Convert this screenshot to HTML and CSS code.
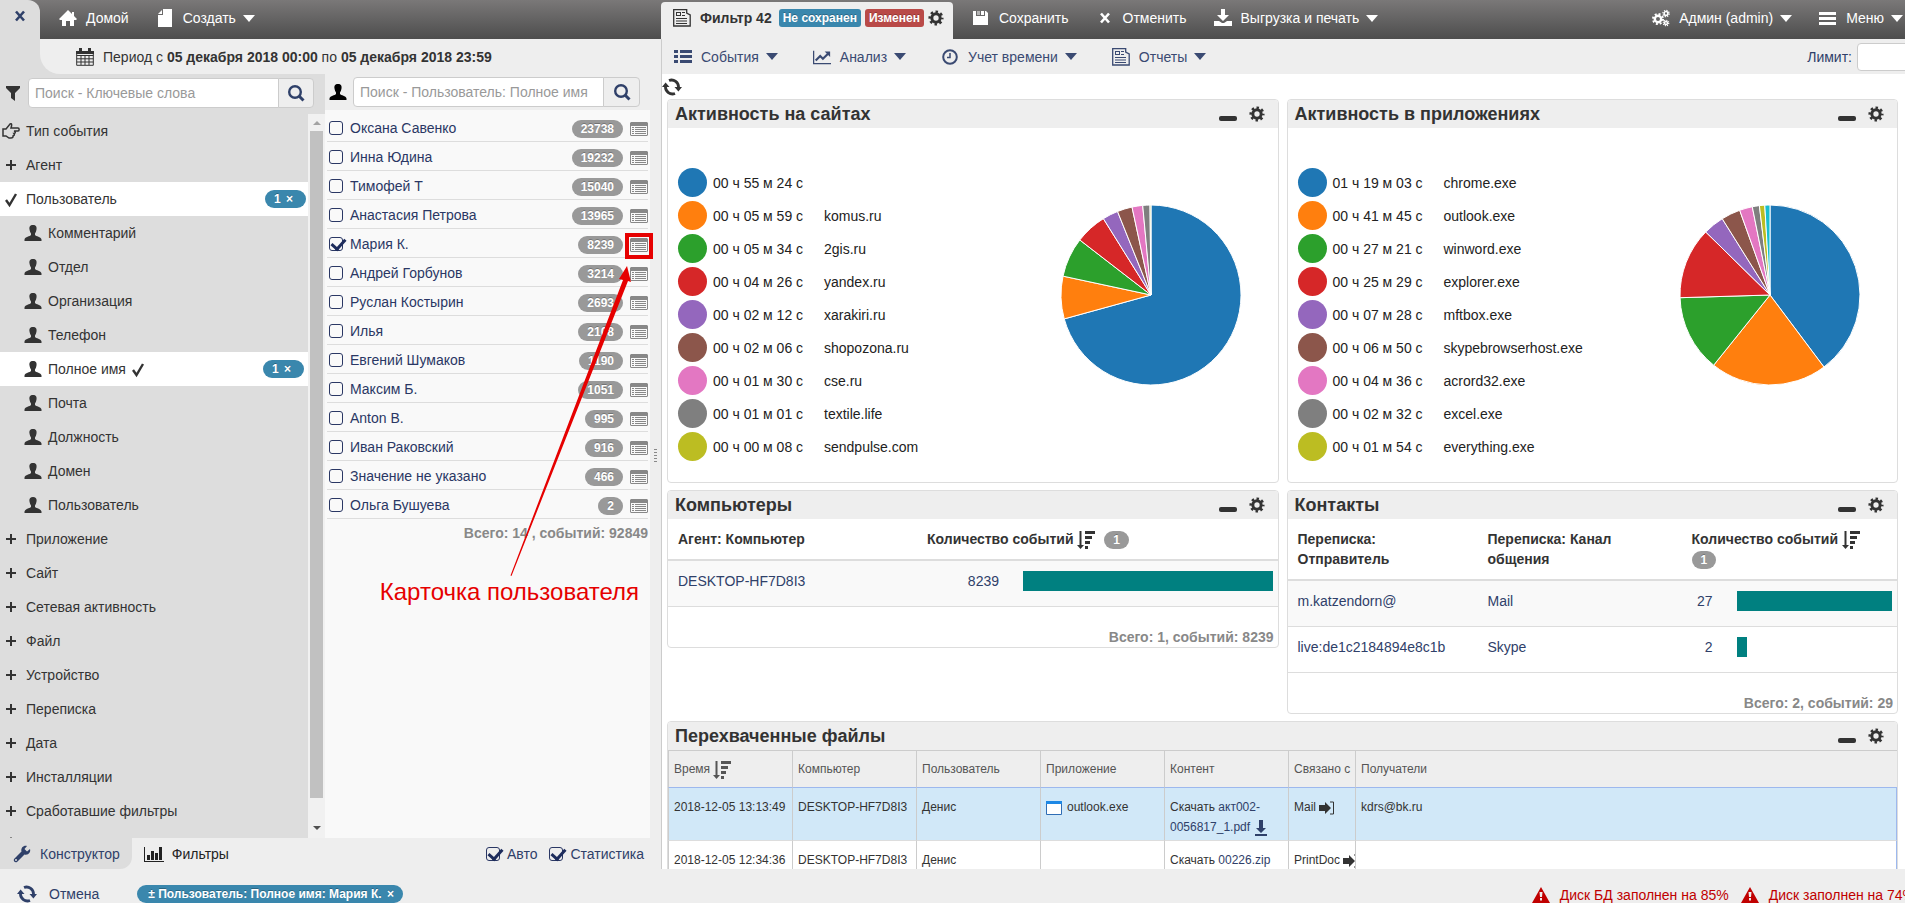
FILE: index.html
```html
<!DOCTYPE html>
<html lang="ru">
<head>
    <meta charset="UTF-8">
    <meta name="viewport" content="width=device-width, initial-scale=1.0">
    <title>Фильтр 42</title>
    <link rel="stylesheet" href="styles.css">
</head>
<body>
    <svg class="sprite" aria-hidden="true">
        <symbol id="i-home" viewBox="0 0 18 18"><path d="M9 1 0 10l1 1h2v6h4v-5h4v5h4v-6h2l1-1-3-3V3h-2v2z"/></symbol>
        <symbol id="i-file" viewBox="0 0 18 18"><path d="M7 0h9v18H2V6h5z"/><path d="M2 5l4-4v4z"/></symbol>
        <symbol id="i-calendar" viewBox="0 0 18 18"><path d="M.7 3.700h16.600v13.600H.7zM.7 7.500h16.600M.7 10.800h16.600M.7 14h16.600M5 7v10M9 7v10M13 7v10" fill="none" stroke="currentColor"/><path d="M0 3h18v3H0zM3 0h3v5H3zm9 0h3v5h-3z"/></symbol>
        <symbol id="i-filter" viewBox="0 0 18 18"><path d="M2 2h14v2l-5 5v8l-4-3V9L2 4z"/></symbol>
        <symbol id="i-search" viewBox="0 0 18 18"><circle cx="8" cy="8" r="5.8" fill="none" stroke="currentColor" stroke-width="2.4"/><path d="M12 12l4.5 4.5" stroke="currentColor" stroke-width="3"/></symbol>
        <symbol id="i-hand" viewBox="0 0 18 18"><path d="M1 7h3l4-5c2-1 2 1 1 4h7c1.500 0 1.500 3 0 3h-4c2 .5 1.500 2.500 0 2.500.8 1 .3 2-.8 2.200 0 1.500-.8 2.300-2.200 2.300H7L4 14H1z" fill="none" stroke="currentColor" stroke-width="1.500"/></symbol>
        <symbol id="i-plus" viewBox="0 0 18 18"><path d="M8 4h2v4h4v2h-4v4H8v-4H4V8h4z"/></symbol>
        <symbol id="i-check" viewBox="0 0 18 18"><path d="M4 10l3.500 5L14 4" fill="none" stroke="currentColor" stroke-width="2.400"/></symbol>
        <symbol id="i-user" viewBox="0 0 18 18"><path d="M9 1c3 0 4 2 3.500 4.500-.3 2-1 3-1.500 4V11c1 1.500 6 1.500 6.500 4.500V17H.5v-1.500C1 12.500 6 12.500 7 11V9.500c-.5-1-1.200-2-1.500-4C5 3 6 1 9 1z"/></symbol>
        <symbol id="i-card" viewBox="0 0 18 14"><path d="M1 0h16l1 1v12l-1 1H1l-1-1V1zM1 4v9h16V4zm1 1h2v1H2zm3 0h11v1H5zM2 7h2v1H2zm3 0h11v1H5zM2 9h2v1H2zm3 0h11v1H5zM2 11h2v1H2zm3 0h11v1H5z" fill-rule="evenodd"/></symbol>
        <symbol id="i-x" viewBox="0 0 18 18"><path d="M5 4.500l8 9M13 4.500l-8 9" stroke="currentColor" stroke-width="2.600"/></symbol>
        <symbol id="i-news" viewBox="0 0 18 18"><path d="M.7.700h13V4l3.500 2v11H.7z" fill="none" stroke="currentColor" stroke-width="1.300"/><path d="M3 3h5v4H3zm1 1v2h3V4zm5-1h3v1H9zm0 3h3v1H9zM3 9h11v1H3zm0 2.500h11v1H3zM3 14h11v1H3z" fill-rule="evenodd"/></symbol>
        <symbol id="i-gear" viewBox="0 0 18 18"><circle cx="9" cy="9" r="4.700" fill="none" stroke="currentColor" stroke-width="3.400"/><circle cx="9" cy="9" r="7.100" fill="none" stroke="currentColor" stroke-width="2.800" stroke-dasharray="2.788" stroke-dashoffset="1.394"/></symbol>
        <symbol id="i-cogs" viewBox="0 0 18 18"><circle cx="6" cy="10" r="3.200" fill="none" stroke="currentColor" stroke-width="2.400"/><circle cx="6" cy="10" r="5" fill="none" stroke="currentColor" stroke-width="2" stroke-dasharray="1.963"/><circle cx="14" cy="4.500" r="1.900" fill="none" stroke="currentColor" stroke-width="1.500"/><circle cx="14" cy="4.500" r="3.100" fill="none" stroke="currentColor" stroke-width="1.300" stroke-dasharray="1.217"/><circle cx="14" cy="14" r="1.500" fill="none" stroke="currentColor" stroke-width="1.500"/><circle cx="14" cy="14" r="2.700" fill="none" stroke="currentColor" stroke-width="1.300" stroke-dasharray="1.060"/></symbol>
        <symbol id="i-save" viewBox="0 0 18 18"><path d="M1 2h3v5h9V2h1l2 2v12H1zm8 0h3v4H9z" fill-rule="evenodd"/><path d="M5 2h3v4H5z" opacity=".5"/></symbol>
        <symbol id="i-download" viewBox="0 0 18 18"><path d="M7 0h4v6h4l-6 6-6-6h4z"/><path d="M0 12h5l3 2h2l3-2h5v5H0z"/></symbol>
        <symbol id="i-menu" viewBox="0 0 18 18"><path d="M0 3h17v3H0zm0 5h17v3H0zm0 5h17v3H0z"/></symbol>
        <symbol id="i-list" viewBox="0 0 18 18"><path d="M6 2h12v3H6zm0 5h12v3H6zm0 5h12v3H6zM0 2h4v3H0zm0 5h4v3H0zm0 5h4v3H0z"/></symbol>
        <symbol id="i-chart" viewBox="0 0 20 18"><path d="M.7 2v14.300H20" fill="none" stroke="currentColor" stroke-width="1.400"/><path d="M3 13l5-5 3 3 6-6" fill="none" stroke="currentColor" stroke-width="2.400"/><path d="M13 3h6v6z"/></symbol>
        <symbol id="i-clock" viewBox="0 0 18 18"><circle cx="9" cy="9" r="6.800" fill="none" stroke="currentColor" stroke-width="2"/><path d="M9 5v4.500H6" fill="none" stroke="currentColor" stroke-width="1.500"/></symbol>
        <symbol id="i-refresh" viewBox="0 0 20 18"><path d="M7 2.500a7 7 0 0 1 9.500 7M13 15.500a7 7 0 0 1-9.500-7" fill="none" stroke="currentColor" stroke-width="2.800"/><path d="M12.500 9H20l-3.600 4.500zM0 9h7.500L3.600 4.500z"/></symbol>
        <symbol id="i-sort" viewBox="0 0 18 18"><path d="M2.500 0h2v14H7l-3.500 4L0 14h2.500zM8 0h10v3H8zm0 5h7v3H8zm0 5h5v3H8zm0 5h3v3H8z"/></symbol>
        <symbol id="i-window" viewBox="0 0 16 14"><path d="M.5.500h15v13H.5z" fill="#fff" stroke="#2f6db5"/><path d="M0 0h16v3H0z" fill="#1e88e5"/></symbol>
        <symbol id="i-save-file" viewBox="0 0 12 16"><path d="M4 0h4v8h3l-5 5-5-5h3zM0 14h12v2H0z"/></symbol>
        <symbol id="i-signin" viewBox="0 0 16 14"><path d="M0 4h6V1l6 6-6 6v-3H0z"/><path d="M11 1h3.500v12H11" fill="none" stroke="currentColor"/></symbol>
        <symbol id="i-wrench" viewBox="0 0 18 18"><path d="M17 4l-3 2.500L11.500 4 14 1C11 0 7.500 2.500 8.500 6.500L1 14c-1 2 1 4 3 3l7.500-7.500C15.500 10.500 18 7 17 4zM3 16a1 1 0 1 1 0-2 1 1 0 0 1 0 2z"/></symbol>
        <symbol id="i-bars" viewBox="0 0 20 18"><path d="M0 2h1v14h19v1H0zm3 8h3v5H3zm4-4h3v9H7zm4 2h3v7h-3zm4-6h3v13h-3z"/></symbol>
        <symbol id="i-warning" viewBox="0 0 18 16"><path d="M9 0l9 16H0zM7.500 5l.5 5h2l.5-5zm.5 6v2.500h2V11z" fill-rule="evenodd"/></symbol>
    </svg>

    <div class="app">
        <div class="workspace">
            <aside class="left">
                <div class="topbar">
                    <button class="close-tab" aria-label="Закрыть"><svg class="icon"><use href="#i-x"/></svg></button>
                    <nav class="topnav">
                        <a href="#"><svg class="icon"><use href="#i-home"/></svg>Домой</a>
                        <a href="#"><svg class="icon"><use href="#i-file"/></svg>Создать<i class="caret"></i></a>
                    </nav>
                </div>
                <div class="period-wrap">
                    <div class="period">
                        <svg class="icon"><use href="#i-calendar"/></svg>
                        <span>Период с <b>05 декабря 2018 00:00</b> по <b>05 декабря 2018 23:59</b></span>
                    </div>
                </div>
                <div class="columns">
                    <section class="tree-col">
                        <form class="search">
                            <svg class="icon"><use href="#i-filter"/></svg>
                            <input type="text" aria-label="Ключевые слова" placeholder="Поиск - Ключевые слова">
                            <button type="button" aria-label="Найти"><svg class="icon"><use href="#i-search"/></svg></button>
                        </form>
                        <div class="tree-box">
                            <ul class="tree">
                                <li><svg class="icon"><use href="#i-hand"/></svg>Тип события</li>
                                <li><svg class="icon"><use href="#i-plus"/></svg>Агент</li>
                                <li class="active"><svg class="icon"><use href="#i-check"/></svg>Пользователь<span class="badge blue">1 <small>×</small></span></li>
                                <li class="sub"><svg class="icon"><use href="#i-user"/></svg>Комментарий</li>
                                <li class="sub"><svg class="icon"><use href="#i-user"/></svg>Отдел</li>
                                <li class="sub"><svg class="icon"><use href="#i-user"/></svg>Организация</li>
                                <li class="sub"><svg class="icon"><use href="#i-user"/></svg>Телефон</li>
                                <li class="sub active"><svg class="icon"><use href="#i-user"/></svg>Полное имя<svg class="icon mark"><use href="#i-check"/></svg><span class="badge blue">1 <small>×</small></span></li>
                                <li class="sub"><svg class="icon"><use href="#i-user"/></svg>Почта</li>
                                <li class="sub"><svg class="icon"><use href="#i-user"/></svg>Должность</li>
                                <li class="sub"><svg class="icon"><use href="#i-user"/></svg>Домен</li>
                                <li class="sub"><svg class="icon"><use href="#i-user"/></svg>Пользователь</li>
                                <li><svg class="icon"><use href="#i-plus"/></svg>Приложение</li>
                                <li><svg class="icon"><use href="#i-plus"/></svg>Сайт</li>
                                <li><svg class="icon"><use href="#i-plus"/></svg>Сетевая активность</li>
                                <li><svg class="icon"><use href="#i-plus"/></svg>Файл</li>
                                <li><svg class="icon"><use href="#i-plus"/></svg>Устройство</li>
                                <li><svg class="icon"><use href="#i-plus"/></svg>Переписка</li>
                                <li><svg class="icon"><use href="#i-plus"/></svg>Дата</li>
                                <li><svg class="icon"><use href="#i-plus"/></svg>Инсталляции</li>
                                <li><svg class="icon"><use href="#i-plus"/></svg>Сработавшие фильтры</li>
                                <li><svg class="icon"><use href="#i-home"/></svg></li>
                            </ul>
                            <div class="scrollbar"><i class="arrow-up"></i><div class="thumb"></div><i class="arrow-down"></i></div>
                        </div>
                    </section>
                    <section class="users-col">
                        <form class="search">
                            <svg class="icon"><use href="#i-user"/></svg>
                            <input type="text" aria-label="Пользователь" placeholder="Поиск - Пользователь: Полное имя">
                            <button type="button" aria-label="Найти"><svg class="icon"><use href="#i-search"/></svg></button>
                        </form>
                        <div class="users">
                            <ul>
                                <li><label><input type="checkbox">Оксана Савенко</label><span class="badge">23738</span><button aria-label="Карточка"><svg class="card-icon"><use href="#i-card"/></svg></button></li>
                                <li><label><input type="checkbox">Инна Юдина</label><span class="badge">19232</span><button aria-label="Карточка"><svg class="card-icon"><use href="#i-card"/></svg></button></li>
                                <li><label><input type="checkbox">Тимофей Т</label><span class="badge">15040</span><button aria-label="Карточка"><svg class="card-icon"><use href="#i-card"/></svg></button></li>
                                <li><label><input type="checkbox">Анастасия Петрова</label><span class="badge">13965</span><button aria-label="Карточка"><svg class="card-icon"><use href="#i-card"/></svg></button></li>
                                <li><label><input type="checkbox" checked>Мария К.</label><span class="badge">8239</span><button aria-label="Карточка"><svg class="card-icon"><use href="#i-card"/></svg></button></li>
                                <li><label><input type="checkbox">Андрей Горбунов</label><span class="badge">3214</span><button aria-label="Карточка"><svg class="card-icon"><use href="#i-card"/></svg></button></li>
                                <li><label><input type="checkbox">Руслан Костырин</label><span class="badge">2693</span><button aria-label="Карточка"><svg class="card-icon"><use href="#i-card"/></svg></button></li>
                                <li><label><input type="checkbox">Илья</label><span class="badge">2108</span><button aria-label="Карточка"><svg class="card-icon"><use href="#i-card"/></svg></button></li>
                                <li><label><input type="checkbox">Евгений Шумаков</label><span class="badge">1190</span><button aria-label="Карточка"><svg class="card-icon"><use href="#i-card"/></svg></button></li>
                                <li><label><input type="checkbox">Максим Б.</label><span class="badge">1051</span><button aria-label="Карточка"><svg class="card-icon"><use href="#i-card"/></svg></button></li>
                                <li><label><input type="checkbox">Anton B.</label><span class="badge">995</span><button aria-label="Карточка"><svg class="card-icon"><use href="#i-card"/></svg></button></li>
                                <li><label><input type="checkbox">Иван Раковский</label><span class="badge">916</span><button aria-label="Карточка"><svg class="card-icon"><use href="#i-card"/></svg></button></li>
                                <li><label><input type="checkbox">Значение не указано</label><span class="badge">466</span><button aria-label="Карточка"><svg class="card-icon"><use href="#i-card"/></svg></button></li>
                                <li><label><input type="checkbox">Ольга Бушуева</label><span class="badge">2</span><button aria-label="Карточка"><svg class="card-icon"><use href="#i-card"/></svg></button></li>
                            </ul>
                            <p class="total">Всего: 14 , событий: 92849</p>
                            <!-- callout for the user card button -->
                            <svg class="callout-arrow" viewBox="0 0 330 480"><path d="M300 123h28v26h-28zm4 4v18h20v-18z" fill-rule="evenodd"/><path d="M185.500 465.500L298 170l-4-1 8-13 4 16-3-1L186.500 466z"/></svg>
                            <div class="callout-text">Карточка пользователя</div>
                        </div>
                    </section>
                    <div class="splitter"><i></i></div>
                </div>
                <div class="bottom-tabs">
                    <a class="current" href="#"><svg class="icon"><use href="#i-wrench"/></svg>Конструктор</a>
                    <a href="#"><svg class="icon wide"><use href="#i-bars"/></svg>Фильтры</a>
                    <div class="options">
                        <label><input type="checkbox" checked>Авто</label>
                        <label><input type="checkbox" checked>Статистика</label>
                    </div>
                </div>
            </aside>

            <main class="right">
                <div class="topbar">
                    <div class="filter-tab">
                        <svg class="icon"><use href="#i-news"/></svg>
                        <b>Фильтр 42</b>
                        <span class="tag blue">Не сохранен</span>
                        <span class="tag red">Изменен</span>
                        <button aria-label="Настройки"><svg class="icon small"><use href="#i-gear"/></svg></button>
                    </div>
                    <nav class="topnav">
                        <a href="#"><svg class="icon"><use href="#i-save"/></svg>Сохранить</a>
                        <a href="#"><svg class="icon"><use href="#i-x"/></svg>Отменить</a>
                        <a href="#"><svg class="icon"><use href="#i-download"/></svg>Выгрузка и печать<i class="caret"></i></a>
                    </nav>
                    <nav class="topnav account">
                        <a href="#"><svg class="icon"><use href="#i-cogs"/></svg>Админ (admin)<i class="caret"></i></a>
                        <a href="#"><svg class="icon"><use href="#i-menu"/></svg>Меню<i class="caret"></i></a>
                    </nav>
                </div>
                <div class="toolbar">
                    <a href="#"><svg class="icon"><use href="#i-list"/></svg>События<i class="caret"></i></a>
                    <a href="#"><svg class="icon"><use href="#i-chart"/></svg>Анализ<i class="caret"></i></a>
                    <a href="#"><svg class="icon"><use href="#i-clock"/></svg>Учет времени<i class="caret"></i></a>
                    <a href="#"><svg class="icon"><use href="#i-news"/></svg>Отчеты<i class="caret"></i></a>
                    <div class="limit"><label for="limit">Лимит:</label><input type="text" id="limit"></div>
                </div>
                <div class="content">
                    <button class="reload" aria-label="Обновить"><svg class="icon wide"><use href="#i-refresh"/></svg></button>
                    <div class="panels">
                        <section class="panel">
                            <header><h2>Активность на сайтах</h2><button aria-label="Свернуть"><i class="minus"></i></button><button aria-label="Настройки"><svg class="icon small"><use href="#i-gear"/></svg></button></header>
                            <div class="activity">
                                <ul id="sitesLegend" class="legend"></ul>
                                <svg id="sitesPie" class="pie" viewBox="-90 -90 180 180"></svg>
                            </div>
                        </section>
                        <section class="panel">
                            <header><h2>Активность в приложениях</h2><button aria-label="Свернуть"><i class="minus"></i></button><button aria-label="Настройки"><svg class="icon small"><use href="#i-gear"/></svg></button></header>
                            <div class="activity">
                                <ul id="appsLegend" class="legend"></ul>
                                <svg id="appsPie" class="pie" viewBox="-90 -90 180 180"></svg>
                            </div>
                        </section>
                        <section class="panel">
                            <header><h2>Компьютеры</h2><button aria-label="Свернуть"><i class="minus"></i></button><button aria-label="Настройки"><svg class="icon small"><use href="#i-gear"/></svg></button></header>
                            <table class="stats">
                                <colgroup><col class="computer"><col class="count"><col></colgroup>
                                <thead>
                                    <tr><th>Агент: Компьютер</th><th colspan="2">Количество событий <svg class="icon"><use href="#i-sort"/></svg> <span class="badge">1</span></th></tr>
                                </thead>
                                <tbody>
                                    <tr><td><a href="#">DESKTOP-HF7D8I3</a></td><td class="num"><a href="#">8239</a></td><td class="bar"><div style="width: 100%"></div></td></tr>
                                </tbody>
                            </table>
                            <p class="total">Всего: 1, событий: 8239</p>
                        </section>
                        <section class="panel">
                            <header><h2>Контакты</h2><button aria-label="Свернуть"><i class="minus"></i></button><button aria-label="Настройки"><svg class="icon small"><use href="#i-gear"/></svg></button></header>
                            <table class="stats">
                                <colgroup><col class="sender"><col class="channel"><col class="count-small"><col></colgroup>
                                <thead>
                                    <tr><th>Переписка: Отправитель</th><th>Переписка: Канал общения</th><th colspan="2">Количество событий <svg class="icon"><use href="#i-sort"/></svg> <span class="badge">1</span></th></tr>
                                </thead>
                                <tbody>
                                    <tr><td><a href="#">m.katzendorn@</a></td><td><a href="#">Mail</a></td><td class="num"><a href="#">27</a></td><td class="bar"><div style="width: 100%"></div></td></tr>
                                    <tr><td><a href="#">live:de1c2184894e8c1b</a></td><td><a href="#">Skype</a></td><td class="num"><a href="#">2</a></td><td class="bar"><div style="width: 7%"></div></td></tr>
                                </tbody>
                            </table>
                            <p class="total">Всего: 2, событий: 29</p>
                        </section>
                        <section class="panel wide-panel">
                            <header><h2>Перехваченные файлы</h2><button aria-label="Свернуть"><i class="minus"></i></button><button aria-label="Настройки"><svg class="icon small"><use href="#i-gear"/></svg></button></header>
                            <table class="files">
                                <colgroup><col class="std"><col class="std"><col class="std"><col class="std"><col class="std"><col class="linked"><col></colgroup>
                                <thead>
                                    <tr><th>Время <svg class="icon"><use href="#i-sort"/></svg></th><th>Компьютер</th><th>Пользователь</th><th>Приложение</th><th>Контент</th><th>Связано с</th><th>Получатели</th></tr>
                                </thead>
                                <tbody>
                                    <tr class="selected"><td>2018-12-05 13:13:49</td><td>DESKTOP-HF7D8I3</td><td>Денис</td><td><svg class="win-icon"><use href="#i-window"/></svg>outlook.exe</td><td>Скачать <a href="#">акт002-0056817_1.pdf</a> <svg class="save-icon"><use href="#i-save-file"/></svg></td><td>Mail <svg class="in-icon"><use href="#i-signin"/></svg></td><td>kdrs@bk.ru</td></tr>
                                    <tr><td>2018-12-05 12:34:36</td><td>DESKTOP-HF7D8I3</td><td>Денис</td><td></td><td>Скачать <a href="#">00226.zip</a></td><td>PrintDoc <svg class="in-icon"><use href="#i-signin"/></svg></td><td></td></tr>
                                </tbody>
                            </table>
                        </section>
                    </div>
                </div>
            </main>
        </div>

        <footer class="status">
            <button class="cancel"><svg class="icon wide"><use href="#i-refresh"/></svg>Отмена</button>
            <span class="badge blue">± Пользователь: Полное имя: Мария К. <small>×</small></span>
            <div class="alerts">
                <span><svg class="warn-icon"><use href="#i-warning"/></svg>Диск БД заполнен на 85%</span>
                <span><svg class="warn-icon"><use href="#i-warning"/></svg>Диск заполнен на 74%</span>
            </div>
        </footer>
    </div>

    <script>
        const colors = ['#1f77b4', '#ff7f0e', '#2ca02c', '#d62728', '#9467bd', '#8c564b', '#e377c2', '#7f7f7f', '#bcbd22', '#17becf'];

        // [seconds, name]
        const sites = [[3324, ''], [359, 'komus.ru'], [334, '2gis.ru'], [266, 'yandex.ru'], [132, 'xarakiri.ru'],
            [126, 'shopozona.ru'], [90, 'cse.ru'], [61, 'textile.life'], [8, 'sendpulse.com']];
        const apps = [[4743, 'chrome.exe'], [2505, 'outlook.exe'], [1641, 'winword.exe'], [1529, 'explorer.exe'], [448, 'mftbox.exe'],
            [410, 'skypebrowserhost.exe'], [276, 'acrord32.exe'], [152, 'excel.exe'], [114, 'everything.exe'], [110, '']];

        function pad(n) {
            return String(n).padStart(2, '0');
        }

        function formatTime(s) {
            return `${pad(Math.floor(s / 3600))} ч ${pad(Math.floor(s / 60) % 60)} м ${pad(s % 60)} с`;
        }

        function drawLegend(id, data) {
            document.getElementById(id).innerHTML = data.slice(0, 9).map((d, i) =>
                `<li><i style="background: ${colors[i]}"></i><span>${formatTime(d[0])}</span>${d[1]}</li>`).join('');
        }

        function drawPie(id, data) {
            const r = 90;
            const total = data.reduce((sum, d) => sum + d[0], 0);
            let angle = 0;
            let html = '';
            data.forEach((d, i) => {
                const next = angle + d[0] / total * 2 * Math.PI;
                const large = next - angle > Math.PI ? 1 : 0;
                html += `<path fill="${colors[i]}" d="M0 0L${r * Math.sin(angle)} ${-r * Math.cos(angle)}A${r} ${r} 0 ${large} 1 ${r * Math.sin(next)} ${-r * Math.cos(next)}Z"/>`;
                angle = next;
            });
            document.getElementById(id).innerHTML = html;
        }

        drawLegend('sitesLegend', sites);
        drawPie('sitesPie', sites);
        drawLegend('appsLegend', apps);
        drawPie('appsPie', apps);
    </script>
</body>
</html>
```
FILE: styles.css
```css
* {
    box-sizing: border-box;
}
body {
    margin: 0;
    font-family: "Liberation Sans", Arial, sans-serif;
    font-size: 14px;
    line-height: 20px;
    color: #333;
    background: #eee;
}
ul, p, h2 {
    margin: 0;
    padding: 0;
    list-style: none;
}
a {
    color: #2f4069;
    text-decoration: none;
}
button {
    padding: 0;
    border: 0;
    background: none;
    font: inherit;
    color: inherit;
    cursor: pointer;
}
.sprite {
    position: absolute;
    width: 0;
    height: 0;
}
svg {
    fill: currentColor;
    flex: none;
}
.icon {
    display: block;
    width: 18px;
    height: 18px;
}
.icon.wide {
    width: 20px;
}
.icon.small {
    width: 16px;
    height: 16px;
}
.caret {
    width: 0;
    border: 6px solid transparent;
    border-top: 7px solid currentColor;
    border-bottom: 0;
    margin-left: -2px;
}
.badge {
    display: inline-block;
    height: 18px;
    padding: 0 9px;
    border-radius: 9px;
    background: #999;
    color: #fff;
    font-size: 12px;
    font-weight: bold;
    line-height: 18px;
    white-space: nowrap;
    text-shadow: 0 -1px 0 rgba(0,0,0,0.25);
}
.badge small {
    margin-left: 2px;
    font-size: 12px;
}
.blue {
    background: #3a87ad;
}
.red {
    background: #b94a48;
}

/* frame */
.app {
    display: flex;
    flex-direction: column;
    height: 100vh;
    overflow: hidden;
}
.workspace {
    display: flex;
    flex: 1;
    min-height: 0;
}
.left {
    display: flex;
    flex-direction: column;
    flex: none;
    width: 661px;
}
.right {
    display: flex;
    flex-direction: column;
    flex: 1;
    min-width: 0;
    background: #fff;
}
.topbar {
    display: flex;
    flex: none;
    height: 39px;
    background: linear-gradient(#7a7878, #4d4d4d);
    color: #fff;
}
.topnav {
    display: flex;
    gap: 27px;
    padding: 0 19px 3px;
}
.topnav a {
    display: flex;
    align-items: center;
    gap: 9px;
    color: #fff;
    white-space: nowrap;
}
.account {
    margin-left: auto;
    padding-right: 2px;
}
.close-tab {
    width: 40px;
    padding: 0 0 7px;
    border-top-right-radius: 12px;
    background: #ddd;
    color: #2f4069;
}
.close-tab .icon {
    margin: auto;
}

/* left side */
.period-wrap {
    background: #ddd;
    padding-left: 40px;
    flex: none;
}
.period {
    display: flex;
    align-items: center;
    gap: 9px;
    height: 35px;
    padding-left: 36px;
    border-bottom-left-radius: 20px;
    background: #eee;
}
.columns {
    display: flex;
    flex: 1;
    min-height: 0;
}
.tree-col {
    display: flex;
    flex-direction: column;
    width: 325px;
    background: #ddd;
}
.search {
    display: flex;
    align-items: center;
    flex: none;
}
.search input {
    width: 251px;
    height: 30px;
    padding: 0 6px;
    border: 1px solid #ccc;
    border-radius: 4px 0 0 4px;
    background: #fff;
    font: inherit;
}
.search input::placeholder {
    color: #999;
}
.search button {
    display: flex;
    align-items: center;
    justify-content: center;
    width: 36px;
    height: 30px;
    margin-left: -1px;
    border: 1px solid #ccc;
    border-radius: 0 4px 4px 0;
    background: #eee;
    color: #2f4069;
}
.tree-col .search {
    height: 40px;
    padding: 0 0 2px 4px;
}
.search > .icon {
    margin-right: 6px;
}
.tree-box {
    display: flex;
    flex: 1;
    min-height: 0;
}
.tree {
    flex: 1;
    overflow: hidden;
}
.tree li {
    display: flex;
    align-items: center;
    gap: 6px;
    height: 34px;
    padding: 0 2px;
}
.tree .sub {
    padding: 0 4px 0 24px;
}
.tree .active {
    background: #fff;
}
.tree .mark {
    margin-left: -3px;
}
.tree .badge {
    width: 41px;
    margin-left: auto;
}
.scrollbar {
    display: flex;
    flex-direction: column;
    align-items: center;
    width: 17px;
    padding: 7px 0 8px;
    background: #f1f1f1;
}
.thumb {
    width: 13px;
    flex: 1;
    margin: 6px 0 28px;
    background: #c1c1c1;
}
.arrow-up, .arrow-down {
    border: 4px solid transparent;
    border-top: 0;
    border-bottom: 4px solid #a3a3a3;
}
.arrow-down {
    border-bottom: 0;
    border-top: 4px solid #505050;
}
.users-col {
    display: flex;
    flex-direction: column;
    width: 325px;
}
.users-col .search {
    height: 36px;
    padding-left: 4px;
    color: #000;
}
.users-col .search button {
    width: 37px;
}
.users {
    position: relative;
    flex: 1;
    padding: 3px 2px;
    background: #f9f9f9;
}
.users li {
    display: flex;
    align-items: center;
    height: 29px;
    border-bottom: 1px solid #ddd;
}
.users label {
    display: flex;
    align-items: center;
    gap: 7px;
    flex: 1;
    padding: 1px 0 0 2px;
    color: #2a3764;
}
.users .badge {
    margin: 3px 7px 0 0;
}
.users button {
    margin-top: 3px;
    color: #888;
}
.card-icon {
    display: block;
    width: 18px;
    height: 14px;
}
.total {
    font-weight: bold;
    text-align: right;
    color: #888;
}
.users .total {
    padding-top: 4px;
}
.callout-arrow {
    position: absolute;
    left: 0;
    top: 0;
    width: 330px;
    height: 480px;
    fill: #e60000;
}
.callout-text {
    position: absolute;
    right: 11px;
    top: 468px;
    font-size: 24px;
    line-height: 28px;
    color: #e60000;
    white-space: nowrap;
}
.splitter {
    display: flex;
    align-items: center;
    width: 11px;
    padding-left: 4px;
}
.splitter i {
    width: 3px;
    height: 14px;
    background: repeating-linear-gradient(#888 0 1px, #eee 1px 3px);
}
input[type="checkbox"] {
    appearance: none;
    position: relative;
    flex: none;
    width: 14px;
    height: 14px;
    margin: 0;
    border: 1px solid #2a3764;
    border-radius: 3px;
}
input[type="checkbox"]:checked::after {
    content: "";
    position: absolute;
    left: 4px;
    top: -2px;
    width: 6px;
    height: 11px;
    border: solid #1d2c5c;
    border-width: 0 3px 3px 0;
    transform: rotate(42deg);
}
.bottom-tabs {
    display: flex;
    flex: none;
    height: 31px;
    background: #eee;
}
.bottom-tabs a {
    display: flex;
    align-items: center;
    gap: 8px;
    padding: 0 12px;
    color: #222;
}
.bottom-tabs .current {
    gap: 9px;
    padding-left: 13px;
    border-bottom-right-radius: 12px;
    background: #ddd;
    color: #2f4069;
}
.options {
    display: flex;
    align-items: center;
    gap: 12px;
    margin-left: auto;
    padding-right: 17px;
    color: #2f4069;
}
.options label {
    display: flex;
    align-items: center;
    gap: 7px;
}

/* right side */
.filter-tab {
    display: flex;
    align-items: center;
    gap: 4px;
    margin-top: 2px;
    padding: 0 9px 5px 12px;
    border-radius: 4px 4px 0 0;
    background: #eee;
    color: #333;
    white-space: nowrap;
}
.filter-tab b {
    margin: 0 3px 0 5px;
}
.tag {
    padding: 0 4px;
    border-radius: 3px;
    color: #fff;
    font-size: 12px;
    font-weight: bold;
    line-height: 18px;
    text-shadow: 0 -1px 0 rgba(0,0,0,0.25);
}
.toolbar {
    display: flex;
    align-items: center;
    gap: 35px;
    flex: none;
    height: 35px;
    padding-left: 12px;
    border-left: 1px solid #ccc;
    background: #eee;
    overflow: hidden;
}
.toolbar a {
    display: flex;
    align-items: center;
    gap: 9px;
    color: #3a4a72;
}
.limit {
    display: flex;
    align-items: center;
    gap: 5px;
    margin-left: auto;
    margin-right: -52px;
    color: #2f4069;
}
.limit input {
    width: 100px;
    height: 28px;
    border: 1px solid #ccc;
    border-radius: 4px;
    background: #fff;
}
.content {
    flex: 1;
    min-height: 0;
    padding-right: 7px;
    border-left: 1px solid #ccc;
    overflow: hidden;
}
.reload {
    display: block;
    height: 25px;
    padding-top: 1px;
}
.panels {
    display: grid;
    grid-template-columns: 1fr 1fr;
    align-items: start;
    gap: 7px 8px;
    padding-left: 5px;
}
.panel {
    min-width: 0;
    border: 1px solid #ddd;
    border-radius: 4px;
    overflow: hidden;
}
.wide-panel {
    grid-column: 1 / 3;
}
.panel header {
    display: flex;
    align-items: center;
    gap: 12px;
    height: 28px;
    padding: 0 13px 0 7px;
    background: #eee;
}
.panel h2 {
    flex: 1;
    font-size: 18px;
    line-height: 28px;
}
.minus {
    display: block;
    width: 18px;
    height: 5px;
    margin-top: 8px;
    border-radius: 2px;
    background: #333;
}
.activity {
    display: flex;
    align-items: center;
    justify-content: space-between;
    padding: 38px 37px 19px 10px;
}
.legend li {
    display: flex;
    align-items: center;
    height: 33px;
    color: #222;
}
.legend i {
    width: 29px;
    height: 29px;
    margin-right: 6px;
    border-radius: 50%;
}
.legend span {
    width: 111px;
}
.pie {
    width: 180px;
    height: 180px;
    margin-bottom: 40px;
    stroke: #fff;
    overflow: visible;
}

/* tables */
table {
    width: 100%;
    border-collapse: separate;
    border-spacing: 0;
    table-layout: fixed;
}
th, td {
    text-align: left;
    vertical-align: top;
}
th .icon {
    display: inline-block;
    vertical-align: middle;
}
.stats .computer {
    width: 249px;
}
.stats .count {
    width: 94px;
}
.stats .sender {
    width: 190px;
}
.stats .channel {
    width: 204px;
}
.stats .count-small {
    width: 43px;
}
.stats th {
    padding: 10px;
    border-bottom: 2px solid #ddd;
}
.stats th .icon {
    margin-right: 5px;
}
.stats td {
    height: 46px;
    padding: 10px 10px 0;
    border-bottom: 1px solid #ddd;
}
.stats tbody tr:nth-child(odd) {
    background: #f9f9f9;
}
.stats .num {
    padding-right: 12px;
    text-align: right;
}
.stats .bar {
    padding: 10px 5px 0 12px;
}
.bar div {
    height: 20px;
    background: teal;
}
.panel .total {
    padding: 20px 4px 0;
}
.files {
    border-top: 1px solid #ccc;
    font-size: 12px;
}
.files .std {
    width: 124px;
}
.files .linked {
    width: 67px;
}
.files th {
    height: 37px;
    padding: 8px 0 0 5px;
    border-left: 1px solid #ccc;
    border-bottom: 1px solid #9db8ee;
    background: #eee;
    color: #555;
    font-weight: normal;
}
.files td {
    padding: 9px 0 3px 5px;
    border-left: 1px solid #ccc;
    border-bottom: 1px solid #ddd;
    white-space: nowrap;
    overflow: hidden;
}
.files td:nth-child(5) {
    white-space: normal;
}
.files td:last-child {
    border-right: 1px solid #9db8ee;
}
.selected {
    background: #d1e8f8;
}
.win-icon, .save-icon, .in-icon {
    width: 16px;
    height: 14px;
    vertical-align: middle;
}
.win-icon {
    margin-right: 5px;
}
.save-icon {
    width: 12px;
    height: 16px;
    margin-left: 2px;
    color: #2f4069;
}

/* status line */
.status {
    display: flex;
    align-items: center;
    flex: none;
    height: 34px;
    padding: 15px 0 0 17px;
    white-space: nowrap;
    overflow: hidden;
}
.cancel {
    display: flex;
    align-items: center;
    gap: 12px;
    margin-right: 38px;
    color: #2f4069;
}
.status .badge {
    padding: 0 9px 0 11px;
}
.alerts {
    display: flex;
    gap: 12px;
    margin-left: auto;
    margin-right: -10px;
    padding-top: 2px;
    color: #c00000;
}
.alerts span {
    display: flex;
    align-items: center;
    gap: 10px;
}
.warn-icon {
    width: 18px;
    height: 16px;
}
```
